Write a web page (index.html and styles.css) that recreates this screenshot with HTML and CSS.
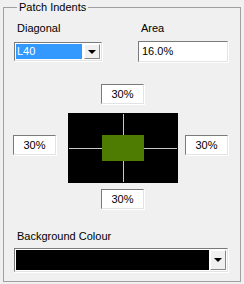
FILE: index.html
```html
<!DOCTYPE html>
<html lang="en">
<head>
    <meta charset="UTF-8">
    <title>Patch Indents</title>
    <link rel="stylesheet" href="styles.css">
</head>
<body>
<fieldset class="group">
    <legend>Patch Indents</legend>

    <div class="top-row">
        <div class="field diag">
            <label>Diagonal</label>
            <div class="combo">
                <span class="combo-value selected">L40</span>
                <span class="drop-btn"><span class="arrow"></span></span>
            </div>
        </div>
        <div class="field area">
            <label>Area</label>
            <div class="textbox">16.0%</div>
        </div>
    </div>

    <div class="indents">
        <div class="textbox pct pct-top">30%</div>
        <div class="textbox pct pct-left">30%</div>
        <svg class="patch" width="110" height="70" viewBox="0 0 110 70">
            <rect x="0" y="0" width="110" height="70" fill="#000"/>
            <rect x="34" y="22" width="42" height="26" fill="#4e7b02"/>
            <line x1="1" y1="35.5" x2="34" y2="35.5" stroke="#c8c8c8" stroke-width="1"/>
            <line x1="76" y1="35.5" x2="109" y2="35.5" stroke="#c8c8c8" stroke-width="1"/>
            <line x1="55.5" y1="1" x2="55.5" y2="22" stroke="#c8c8c8" stroke-width="1"/>
            <line x1="55.5" y1="48" x2="55.5" y2="69" stroke="#c8c8c8" stroke-width="1"/>
        </svg>
        <div class="textbox pct pct-right">30%</div>
        <div class="textbox pct pct-bottom">30%</div>
    </div>

    <div class="field bg">
        <label>Background Colour</label>
        <div class="combo colour-combo">
            <span class="combo-value swatch"></span>
            <span class="drop-btn"><span class="arrow"></span></span>
        </div>
    </div>
</fieldset>
</body>
</html>
```

FILE: styles.css
```css
body {
    margin: 0;
    background: #f0f0f0;
    font-family: "Liberation Sans", Arial, sans-serif;
    font-size: 11px;
    line-height: 13px;
    color: #000;
}

.group {
    box-sizing: border-box;
    margin: 1px 3px 0 3px;
    height: 281px;
    padding: 8px 0 0 10px;
    border: 1px solid #a0a0a0;
}

.group legend {
    margin-left: 3px;
    padding: 0 2px;
    line-height: 13px;
}

.field label {
    display: block;
    line-height: 13px;
    padding-left: 3px;
}

.top-row {
    display: flex;
}

.diag {
    width: 124px;
}

.diag .combo {
    margin-top: 7px;
    width: 88px;
    height: 19px;
}

.area .textbox {
    margin-top: 6px;
    width: 90px;
    height: 21px;
    padding-left: 3px;
    text-align: left;
}

/* sunken edit box */
.textbox {
    box-sizing: border-box;
    background: #fff;
    border-top: 1px solid #7a7a7a;
    border-left: 1px solid #7a7a7a;
    border-right: 1px solid #e3e3e3;
    border-bottom: 1px solid #e3e3e3;
    box-shadow: 1px 1px 0 #fff;
    display: flex;
    align-items: center;
    font-size: 11px;
}

.combo {
    box-sizing: border-box;
    display: flex;
    background: #fff;
    border-top: 1px solid #7a7a7a;
    border-left: 1px solid #7a7a7a;
    border-right: 1px solid #e3e3e3;
    border-bottom: 1px solid #e3e3e3;
    box-shadow: 1px 1px 0 #fff;
    padding: 1px;
}

.combo-value {
    flex: 1;
    display: flex;
    align-items: center;
}

.selected {
    background: #3399ff;
    color: #fff;
    padding-left: 1px;
    margin-right: 2px;
}

.drop-btn {
    box-sizing: border-box;
    width: 16px;
    background: #f0f0f0;
    border-top: 1px solid #fff;
    border-left: 1px solid #fff;
    border-right: 1px solid #888;
    border-bottom: 1px solid #888;
    display: flex;
    align-items: center;
    justify-content: center;
}

.arrow {
    width: 0;
    height: 0;
    border-left: 4px solid transparent;
    border-right: 4px solid transparent;
    border-top: 4px solid #000;
}

.indents {
    display: grid;
    grid-template-columns: 55px 117px 43px;
    grid-template-rows: 20px 79px 26px;
    margin-top: 22px;
    margin-left: -1px;
}

.pct {
    width: 43px;
    height: 20px;
    justify-content: center;
}

.pct-top {
    grid-column: 2;
    grid-row: 1;
    margin-left: 33px;
}

.pct-left {
    grid-column: 1;
    grid-row: 2;
    margin-top: 31px;
}

.patch {
    display: block;
    grid-column: 2;
    grid-row: 2;
    margin-top: 9px;
}

.pct-right {
    grid-column: 3;
    grid-row: 2;
    margin-top: 31px;
}

.pct-bottom {
    grid-column: 2;
    grid-row: 3;
    margin-left: 33px;
    margin-top: 6px;
}

.bg {
    margin-top: 21px;
}

.colour-combo {
    margin-top: 5px;
    width: 214px;
    height: 24px;
}

.swatch {
    background: #000;
    margin-right: 1px;
}
```
